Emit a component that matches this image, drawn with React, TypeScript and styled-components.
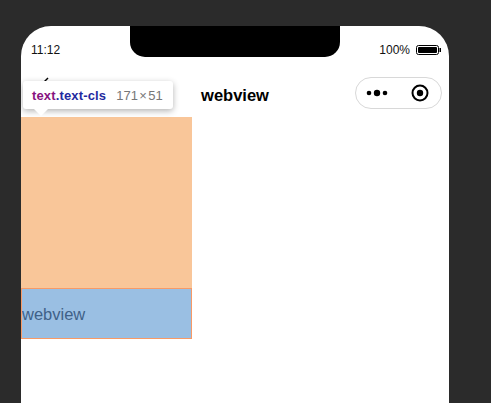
import styled, { createGlobalStyle } from 'styled-components';

const GlobalStyle = createGlobalStyle`
  html, body {
    margin: 0;
    height: 100%;
    background: #2b2b2b;
    overflow: hidden;
  }
  #root {
    height: 100%;
  }
`;

const Page = styled.div`
  box-sizing: border-box;
  height: 403px;
  padding: 26px 42px 0 21px;
  font-family: 'Liberation Sans', Arial, sans-serif;
`;

const Screen = styled.div`
  position: relative;
  height: 100%;
  background: #ffffff;
  border-radius: 30px 30px 0 0;
  overflow: hidden;
`;

const Notch = styled.div`
  position: absolute;
  top: 0;
  left: 109px;
  width: 210px;
  height: 31px;
  background: #000000;
  border-radius: 0 0 15px 15px;
`;

const StatusBar = styled.div`
  display: flex;
  align-items: center;
  justify-content: space-between;
  height: 48px;
  padding: 0 8px 0 10px;
  color: #111111;
  font-size: 12px;
`;

const BatteryGroup = styled.div`
  display: flex;
  align-items: center;
  gap: 6px;
`;

const NavBar = styled.div`
  position: relative;
  display: flex;
  align-items: center;
  justify-content: center;
  height: 43px;
`;

const NavTitle = styled.span`
  color: #000000;
  font-size: 16.5px;
  font-weight: 700;
`;

const BackMark = styled.svg`
  position: absolute;
  top: 2px;
  left: 21px;
`;

const Capsule = styled.div`
  position: absolute;
  top: 3px;
  right: 7px;
  box-sizing: border-box;
  display: flex;
  align-items: center;
  justify-content: space-between;
  width: 87px;
  height: 32px;
  padding: 0 12px 0 10px;
  border: 1px solid #d8d8d8;
  border-radius: 16px;
  background: #ffffff;
`;

const Highlight = styled.div`
  width: 171px;
  height: 171px;
  background: #f9c699;
`;

const TextBlock = styled.div`
  box-sizing: border-box;
  display: flex;
  align-items: center;
  width: 171px;
  height: 51px;
  padding-top: 1px;
  border: 1px solid #f89a66;
  background: #9abfe3;
  color: #3f6188;
  font-size: 16.5px;
`;

const Tooltip = styled.div`
  position: absolute;
  top: 55px;
  left: 2px;
  display: flex;
  align-items: center;
  gap: 10px;
  box-sizing: border-box;
  width: 150px;
  height: 28px;
  padding: 0 9px;
  background: #ffffff;
  border-radius: 3px;
  box-shadow: 0 2px 6px rgba(0, 0, 0, 0.3);
  font-size: 13px;

  &::after {
    content: '';
    position: absolute;
    left: 11px;
    bottom: -7px;
    border-style: solid;
    border-width: 7px 7px 0;
    border-color: #ffffff transparent transparent;
  }
`;

const Selector = styled.span`
  color: #1f2aa0;
  font-weight: 700;
  letter-spacing: 0.15px;
`;

const TagName = styled.span`
  color: #881280;
`;

const Size = styled.span`
  color: #777777;
  word-spacing: -2.2px;
`;

const App = () => (
  <Page>
    <GlobalStyle />
    <Screen>
      <Notch />
      <StatusBar>
        <span>11:12</span>
        <BatteryGroup>
          <span>100%</span>
          <svg width="25" height="10" viewBox="0 0 25 10">
            <rect x="0.5" y="0.5" width="22" height="9" rx="2" fill="none" stroke="#000" />
            <rect x="2" y="2" width="19" height="6" rx="1" fill="#000" />
            <rect x="23.5" y="3" width="1.5" height="4" fill="#000" />
          </svg>
        </BatteryGroup>
      </StatusBar>
      <NavBar>
        <BackMark width="10" height="8" viewBox="0 0 10 8">
          <path d="M1 7 L6 2" stroke="#000" strokeWidth="1.4" fill="none" />
        </BackMark>
        <NavTitle>webview</NavTitle>
        <Capsule>
          <svg width="22" height="8" viewBox="0 0 22 8">
            <circle cx="3" cy="4" r="2.3" fill="#000" />
            <circle cx="11" cy="4" r="3.2" fill="#000" />
            <circle cx="19" cy="4" r="2.3" fill="#000" />
          </svg>
          <svg width="18" height="18" viewBox="0 0 18 18">
            <circle cx="9" cy="9" r="7.5" fill="none" stroke="#000" strokeWidth="2" />
            <circle cx="9" cy="9" r="3.2" fill="#000" />
          </svg>
        </Capsule>
      </NavBar>
      <Highlight />
      <TextBlock>webview</TextBlock>
      <Tooltip>
        <Selector>
          <TagName>text</TagName>.text-cls
        </Selector>
        <Size>171 × 51</Size>
      </Tooltip>
    </Screen>
  </Page>
);

export default App;
